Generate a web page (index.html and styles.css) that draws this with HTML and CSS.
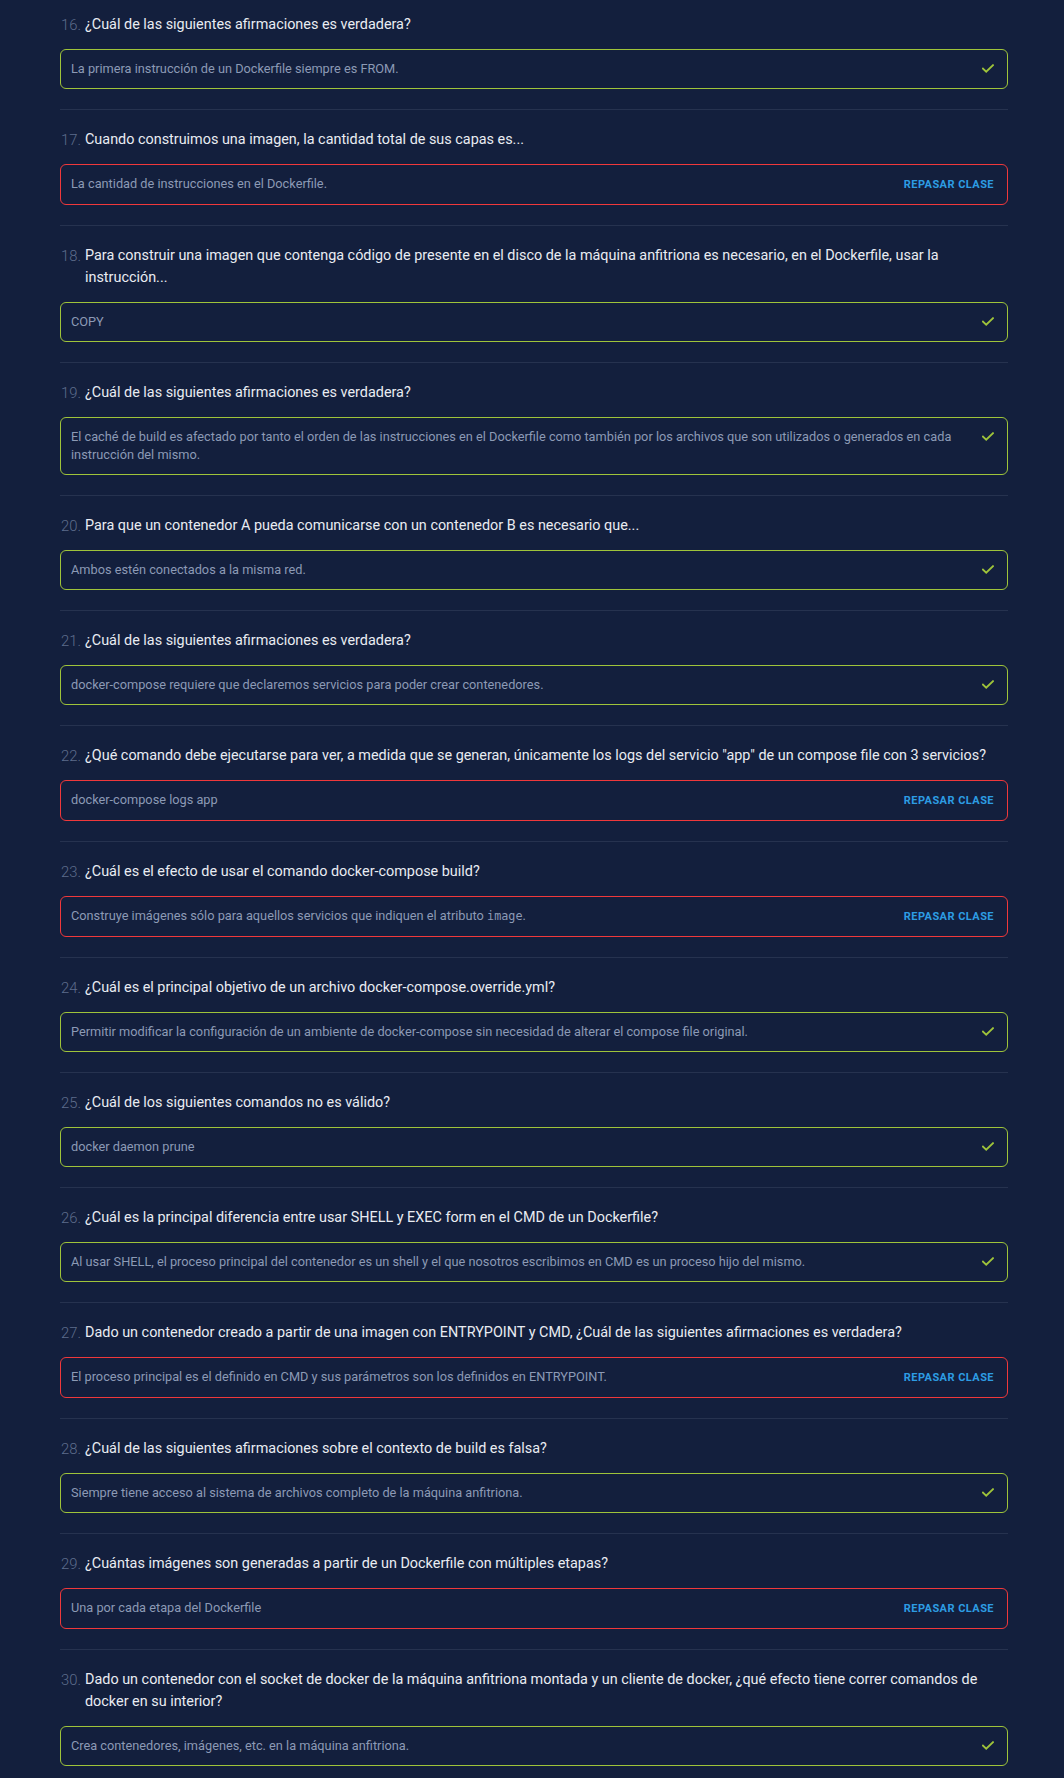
FILE: index.html
```html
<!DOCTYPE html>
<html lang="es">
<head>
<meta charset="utf-8">
<title>Resultados</title>
<link rel="stylesheet" href="styles.css">
</head>
<body>
<main class="quiz">
  <section class="item">
    <h3 class="question"><span class="num">16.</span><span class="qtext">¿Cuál de las siguientes afirmaciones es verdadera?</span></h3>
    <div class="answer correct"><p class="atext">La primera instrucción de un Dockerfile siempre es FROM.</p><svg class="check" viewBox="0 0 12 9"><path d="M1 4.6 L4.2 7.6 L11 1.2"/></svg></div>
  </section>
  <section class="item">
    <h3 class="question"><span class="num">17.</span><span class="qtext">Cuando construimos una imagen, la cantidad total de sus capas es...</span></h3>
    <div class="answer wrong"><p class="atext">La cantidad de instrucciones en el Dockerfile.</p><a class="review" href="#">Repasar clase</a></div>
  </section>
  <section class="item">
    <h3 class="question"><span class="num">18.</span><span class="qtext">Para construir una imagen que contenga código de presente en el disco de la máquina anfitriona es necesario, en el Dockerfile, usar la instrucción...</span></h3>
    <div class="answer correct"><p class="atext">COPY</p><svg class="check" viewBox="0 0 12 9"><path d="M1 4.6 L4.2 7.6 L11 1.2"/></svg></div>
  </section>
  <section class="item">
    <h3 class="question"><span class="num">19.</span><span class="qtext">¿Cuál de las siguientes afirmaciones es verdadera?</span></h3>
    <div class="answer correct"><p class="atext">El caché de build es afectado por tanto el orden de las instrucciones en el Dockerfile como también por los archivos que son utilizados o generados en cada instrucción del mismo.</p><svg class="check" viewBox="0 0 12 9"><path d="M1 4.6 L4.2 7.6 L11 1.2"/></svg></div>
  </section>
  <section class="item">
    <h3 class="question"><span class="num">20.</span><span class="qtext">Para que un contenedor A pueda comunicarse con un contenedor B es necesario que...</span></h3>
    <div class="answer correct"><p class="atext">Ambos estén conectados a la misma red.</p><svg class="check" viewBox="0 0 12 9"><path d="M1 4.6 L4.2 7.6 L11 1.2"/></svg></div>
  </section>
  <section class="item">
    <h3 class="question"><span class="num">21.</span><span class="qtext">¿Cuál de las siguientes afirmaciones es verdadera?</span></h3>
    <div class="answer correct"><p class="atext">docker-compose requiere que declaremos servicios para poder crear contenedores.</p><svg class="check" viewBox="0 0 12 9"><path d="M1 4.6 L4.2 7.6 L11 1.2"/></svg></div>
  </section>
  <section class="item">
    <h3 class="question"><span class="num">22.</span><span class="qtext">¿Qué comando debe ejecutarse para ver, a medida que se generan, únicamente los logs del servicio "app" de un compose file con 3 servicios?</span></h3>
    <div class="answer wrong"><p class="atext">docker-compose logs app</p><a class="review" href="#">Repasar clase</a></div>
  </section>
  <section class="item">
    <h3 class="question"><span class="num">23.</span><span class="qtext">¿Cuál es el efecto de usar el comando docker-compose build?</span></h3>
    <div class="answer wrong"><p class="atext">Construye imágenes sólo para aquellos servicios que indiquen el atributo <code>image</code>.</p><a class="review" href="#">Repasar clase</a></div>
  </section>
  <section class="item">
    <h3 class="question"><span class="num">24.</span><span class="qtext">¿Cuál es el principal objetivo de un archivo docker-compose.override.yml?</span></h3>
    <div class="answer correct"><p class="atext">Permitir modificar la configuración de un ambiente de docker-compose sin necesidad de alterar el compose file original.</p><svg class="check" viewBox="0 0 12 9"><path d="M1 4.6 L4.2 7.6 L11 1.2"/></svg></div>
  </section>
  <section class="item">
    <h3 class="question"><span class="num">25.</span><span class="qtext">¿Cuál de los siguientes comandos no es válido?</span></h3>
    <div class="answer correct"><p class="atext">docker daemon prune</p><svg class="check" viewBox="0 0 12 9"><path d="M1 4.6 L4.2 7.6 L11 1.2"/></svg></div>
  </section>
  <section class="item">
    <h3 class="question"><span class="num">26.</span><span class="qtext">¿Cuál es la principal diferencia entre usar SHELL y EXEC form en el CMD de un Dockerfile?</span></h3>
    <div class="answer correct"><p class="atext">Al usar SHELL, el proceso principal del contenedor es un shell y el que nosotros escribimos en CMD es un proceso hijo del mismo.</p><svg class="check" viewBox="0 0 12 9"><path d="M1 4.6 L4.2 7.6 L11 1.2"/></svg></div>
  </section>
  <section class="item">
    <h3 class="question"><span class="num">27.</span><span class="qtext">Dado un contenedor creado a partir de una imagen con ENTRYPOINT y CMD, ¿Cuál de las siguientes afirmaciones es verdadera?</span></h3>
    <div class="answer wrong"><p class="atext">El proceso principal es el definido en CMD y sus parámetros son los definidos en ENTRYPOINT.</p><a class="review" href="#">Repasar clase</a></div>
  </section>
  <section class="item">
    <h3 class="question"><span class="num">28.</span><span class="qtext">¿Cuál de las siguientes afirmaciones sobre el contexto de build es falsa?</span></h3>
    <div class="answer correct"><p class="atext">Siempre tiene acceso al sistema de archivos completo de la máquina anfitriona.</p><svg class="check" viewBox="0 0 12 9"><path d="M1 4.6 L4.2 7.6 L11 1.2"/></svg></div>
  </section>
  <section class="item">
    <h3 class="question"><span class="num">29.</span><span class="qtext">¿Cuántas imágenes son generadas a partir de un Dockerfile con múltiples etapas?</span></h3>
    <div class="answer wrong"><p class="atext">Una por cada etapa del Dockerfile</p><a class="review" href="#">Repasar clase</a></div>
  </section>
  <section class="item">
    <h3 class="question"><span class="num">30.</span><span class="qtext">Dado un contenedor con el socket de docker de la máquina anfitriona montada y un cliente de docker, ¿qué efecto tiene correr comandos de docker en su interior?</span></h3>
    <div class="answer correct"><p class="atext">Crea contenedores, imágenes, etc. en la máquina anfitriona.</p><svg class="check" viewBox="0 0 12 9"><path d="M1 4.6 L4.2 7.6 L11 1.2"/></svg></div>
  </section>
</main>
</body>
</html>
```
FILE: styles.css
```css
* { box-sizing: border-box; }

html, body {
  margin: 0;
  padding: 0;
  background: #131f3d;
}

body {
  font-family: Roboto, "Liberation Sans", Arial, sans-serif;
  color: #e7eaf0;
}

.quiz {
  width: 948px;
  margin-left: 60px;
  padding-bottom: 14px;
}

.item {
  padding: 19px 0 20px;
  border-bottom: 1px solid #26324f;
}

.item:first-child {
  padding-top: 14px;
}

.item:last-child {
  border-bottom: none;
  padding-bottom: 0;
}

.question {
  display: flex;
  margin: 0 0 13px;
  font-size: 14.4px;
  font-weight: 400;
  line-height: 22px;
}

.num {
  flex: 0 0 25px;
  padding-left: 1px;
  color: #5e6d8c;
  font-size: 14.8px;
  font-weight: 300;
}

.qtext {
  flex: 1;
  color: #e9ecf2;
  padding-right: 10px;
}

.answer {
  display: flex;
  align-items: flex-start;
  justify-content: space-between;
  gap: 12px;
  border: 1px solid;
  border-radius: 6px;
  padding: 10px 13px 10px 10px;
}

.answer.correct { border-color: #9fc43a; }
.answer.wrong { border-color: #f0383b; }

.atext {
  margin: 0;
  font-size: 12.75px;
  line-height: 18px;
  color: #8c9ab5;
}

.atext code {
  font-family: "DejaVu Sans Mono", "Liberation Mono", monospace;
  font-size: 11.8px;
}

.check {
  flex: 0 0 12px;
  width: 12px;
  height: 9px;
  margin-top: 4px;
  fill: none;
  stroke: #9fc43a;
  stroke-width: 1.9;
  stroke-linecap: square;
}

.review {
  flex: 0 0 auto;
  margin-top: 1px;
  font-size: 11px;
  line-height: 18px;
  font-weight: 700;
  letter-spacing: 0.45px;
  text-transform: uppercase;
  text-decoration: none;
  color: #2d9ce3;
}
```
